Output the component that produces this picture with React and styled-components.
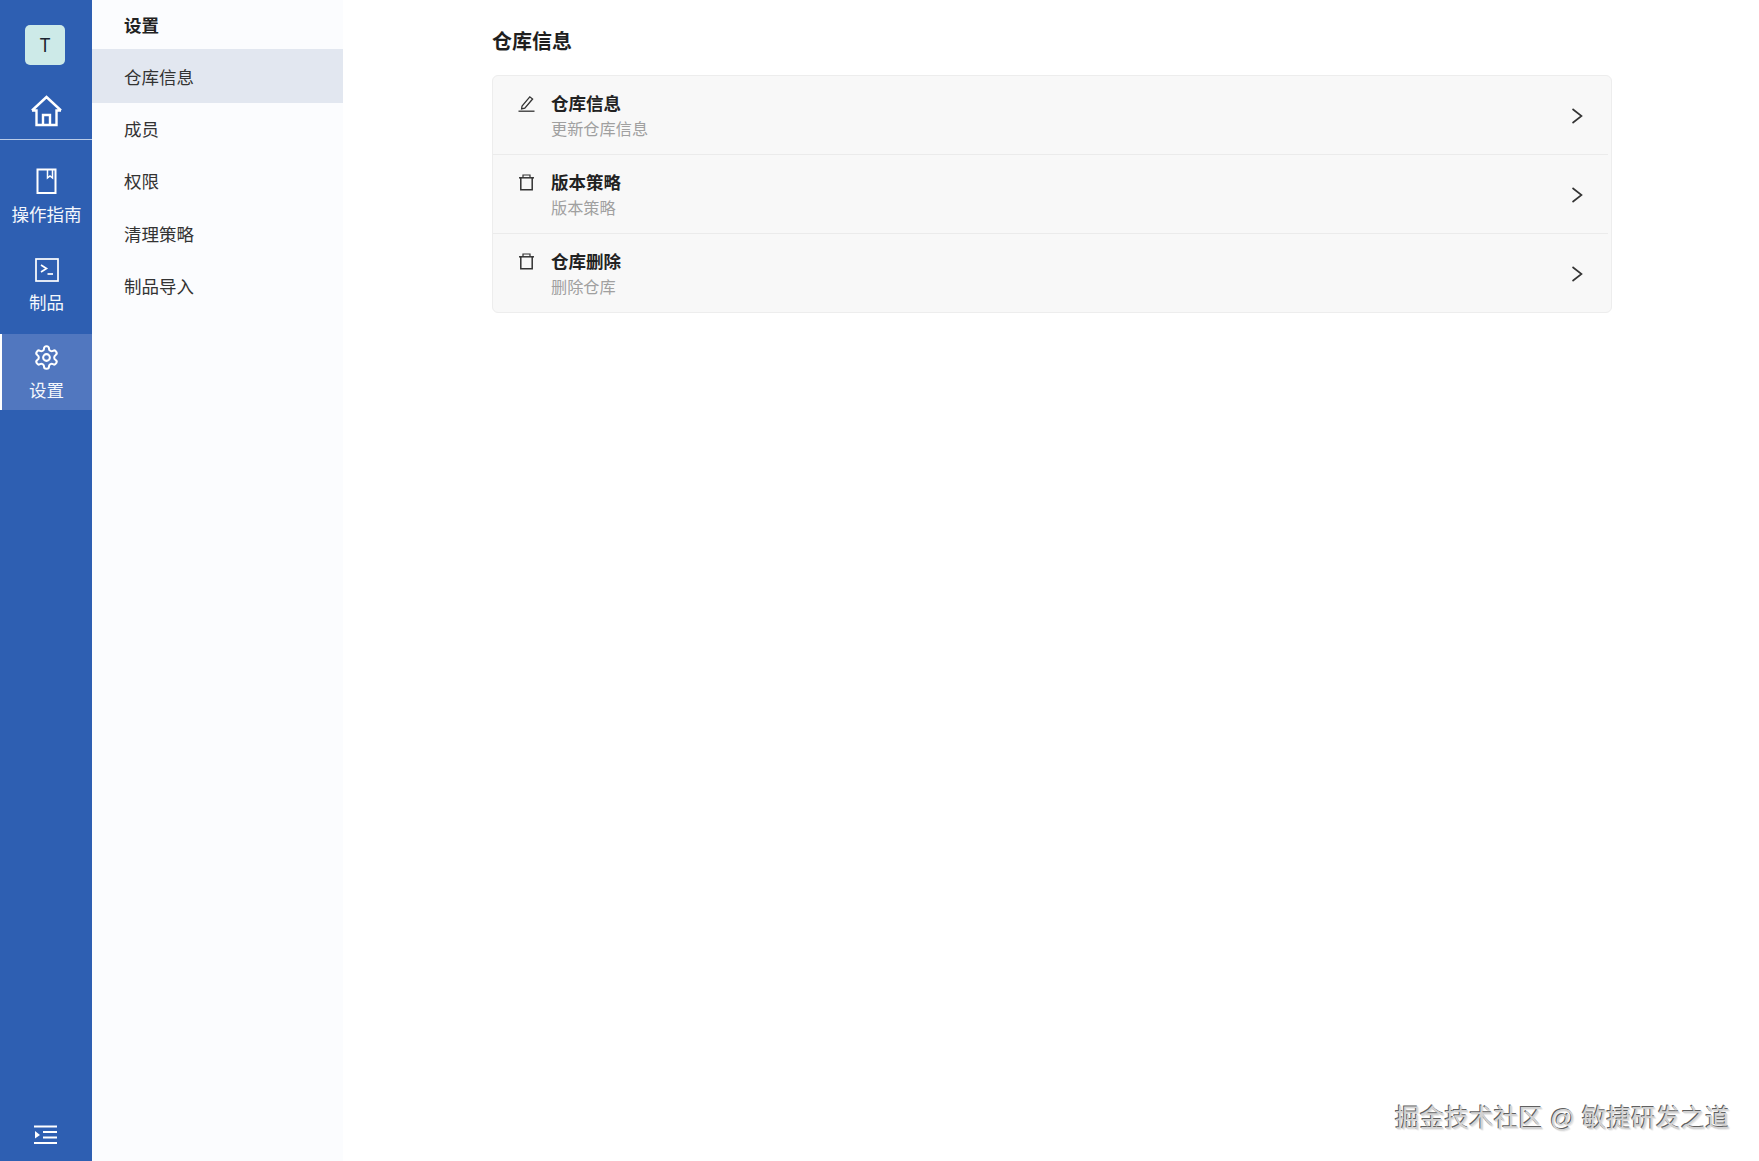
import React from "react";
import styled, { createGlobalStyle } from "styled-components";

const Global = createGlobalStyle`
  html, body { margin: 0; padding: 0; height: 100%; background: #fff; }
  #root { height: 100%; }
  * { box-sizing: border-box; }
  body { font-family: "Inter", "Noto Sans CJK SC", sans-serif; color: #1f1f1f; }
`;

const Page = styled.div`
  display: flex;
  width: 1759px;
  height: 1161px;
  overflow: hidden;
  position: relative;
  background: #fff;
`;
const Rail = styled.aside`
  width: 92px;
  flex: none;
  background: #2e5fb2;
  display: flex;
  flex-direction: column;
  align-items: stretch;
  color: #fff;
`;
const Top = styled.div`
  height: 140px;
  border-bottom: 1px solid #b9cbe8;
  padding-top: 25px;
  display: flex;
  flex-direction: column;
  align-items: center;
`;
const Avatar = styled.div`
  width: 40px;
  height: 40px;
  margin-left: -2px;
  border-radius: 5px;
  background: #cdeae8;
  color: #1c2430;
  font-size: 18px;
  display: flex;
  align-items: center;
  justify-content: center;
`;
const HomeWrap = styled.div`
  margin-top: 30px;
  height: 32px;
  display: flex;
`;
const RailItems = styled.nav`
  flex: 1;
  padding-top: 16px;
  display: flex;
  flex-direction: column;
  gap: 15px;
`;
const RailItem = styled.div`
  height: ${(p) => (p.$active ? 76 : 74)}px;
  padding: ${(p) => p.$pt}px 1px 0 0;
  display: flex;
  flex-direction: column;
  align-items: center;
  gap: 7.5px;
  font-size: 17.5px;
  line-height: 24px;
  color: #f4f7fc;
  background: ${(p) => (p.$active ? "#5177bf" : "transparent")};
  border-left: 2px solid ${(p) => (p.$active ? "#ffffff" : "transparent")};
`;
const IconBox = styled.div`
  height: 27px;
  display: flex;
  align-items: center;
  justify-content: center;
`;
const Collapse = styled.div`
  height: 52px;
  display: flex;
  align-items: center;
  justify-content: center;
`;
const Sub = styled.aside`
  width: 251px;
  flex: none;
  background: #fbfcfe;
`;
const SubTitle = styled.div`
  height: 49px;
  padding: 14px 0 0 32px;
  font-size: 17.5px;
  line-height: 24px;
  font-weight: 600;
  color: #222;
`;
const SubItem = styled.div`
  height: ${(p) => (p.$active ? 54 : 52.3)}px;
  padding: 0 0 ${(p) => (p.$active ? 0 : 1)}px 32px;
  display: flex;
  align-items: center;
  font-size: 17.5px;
  color: #333;
  background: ${(p) => (p.$active ? "#e2e7f0" : "transparent")};
`;
const Main = styled.main`
  flex: 1;
  padding: 28px 147px 0 149px;
`;
const Heading = styled.h1`
  margin: 0 0 19px 0;
  font-size: 20px;
  line-height: 28px;
  font-weight: 600;
  color: #1f1f1f;
`;
const Card = styled.section`
  background: #f8f8f8;
  border: 1px solid #ededed;
  border-radius: 6px;
  padding: 0 3px 0 0;
`;
const Row = styled.div`
  height: ${(p) => (p.$last ? 78 : 79)}px;
  display: flex;
  align-items: flex-start;
  padding: 16px 25px 0 25px;
  border-bottom: ${(p) => (p.$last ? "none" : "1px solid #ebebeb")};
`;
const RowIcon = styled.div`
  width: 33px;
  height: 24px;
  margin-top: -1px;
  display: flex;
  align-items: center;
  flex: none;
`;
const RowText = styled.div`
  flex: 1;
`;
const RowTitle = styled.div`
  font-size: 17.5px;
  line-height: 24px;
  font-weight: 600;
  color: #222;
`;
const RowSub = styled.div`
  margin-top: 1px;
  font-size: 16.2px;
  line-height: 24px;
  color: #a0a0a0;
`;
const Chevron = styled.div`
  align-self: center;
  margin-top: -14px;
  display: flex;
`;
const Watermark = styled.div`
  position: absolute;
  left: 1395px;
  top: 1102px;
  font-size: 24.7px;
  line-height: 34px;
  white-space: nowrap;
  font-family: "Liberation Sans", "Noto Sans CJK SC", sans-serif;
  color: #d2d2d2;
  text-shadow: -1px -1px 0 #606060, 1px 1px 1px #e6e6e6;
`;

const Home = () => (
  <svg width="32" height="32" viewBox="0 0 32 32" fill="none" stroke="#fff" strokeWidth="2.4" strokeLinejoin="miter">
    <path d="M2 15.5 16.5 2 31 15.5 M2 15.5H6.5V30H26.5V15.5H31" />
    <path d="M13 30V20H20V30" />
  </svg>
);
const Book = () => (
  <svg width="22" height="27" viewBox="0 0 22 27" fill="none" stroke="#fff" strokeWidth="2">
    <rect x="1.5" y="1.5" width="18" height="23.5" />
    <path d="M11.5 1.5V10L14 8 16.5 10V1.5" strokeWidth="1.5" />
  </svg>
);
const Terminal = () => (
  <svg width="24" height="24" viewBox="0 0 24 24" fill="none" stroke="#fff" strokeWidth="1.7">
    <rect x="1" y="1" width="22" height="22" />
    <path d="M6 7 11.5 10.5 6 14" />
    <path d="M12.5 16H18" />
  </svg>
);
const Gear = () => (
  <svg width="27" height="27" viewBox="0 0 24 24" fill="none" stroke="#fff" strokeWidth="1.8" strokeLinecap="round" strokeLinejoin="round">
    <path d="M12.22 2h-.44a2 2 0 0 0-2 2v.18a2 2 0 0 1-1 1.73l-.43.25a2 2 0 0 1-2 0l-.15-.08a2 2 0 0 0-2.73.73l-.22.38a2 2 0 0 0 .73 2.73l.15.1a2 2 0 0 1 1 1.72v.51a2 2 0 0 1-1 1.74l-.15.09a2 2 0 0 0-.73 2.73l.22.38a2 2 0 0 0 2.73.73l.15-.08a2 2 0 0 1 2 0l.43.25a2 2 0 0 1 1 1.73V20a2 2 0 0 0 2 2h.44a2 2 0 0 0 2-2v-.18a2 2 0 0 1 1-1.73l.43-.25a2 2 0 0 1 2 0l.15.08a2 2 0 0 0 2.73-.73l.22-.39a2 2 0 0 0-.73-2.73l-.15-.08a2 2 0 0 1-1-1.74v-.5a2 2 0 0 1 1-1.74l.15-.09a2 2 0 0 0 .73-2.73l-.22-.38a2 2 0 0 0-2.73-.73l-.15.08a2 2 0 0 1-2 0l-.43-.25a2 2 0 0 1-1-1.73V4a2 2 0 0 0-2-2z" />
    <circle cx="12" cy="12" r="3" />
  </svg>
);
const Indent = () => (
  <svg width="24" height="20" viewBox="0 0 24 20" fill="#fff">
    <rect x="0" y="0.5" width="23" height="2" />
    <rect x="9" y="6" width="14" height="2" />
    <rect x="9" y="11.5" width="14" height="2" />
    <rect x="0" y="17" width="23" height="2" />
    <path d="M1 6 6 10 1 13.5Z" />
  </svg>
);
const Pen = () => (
  <svg width="17" height="17" viewBox="0 0 17 17" fill="none" stroke="#333" strokeWidth="1.3">
    <path d="M4 11.2 11.8 1.8 14.6 4 6.8 13.2 3.6 14Z" />
    <path d="M0.5 16.2H16.5" />
  </svg>
);
const Trash = () => (
  <svg width="17" height="17" viewBox="0 0 17 17" fill="none" stroke="#333" strokeWidth="1.5">
    <path d="M1 3.8H16" />
    <path d="M5 3.8V1H12V3.8" strokeWidth="1.2" />
    <path d="M2.8 3.8V15.8H14.2V3.8" />
  </svg>
);
const ChevronIcon = () => (
  <svg width="12" height="16" viewBox="0 0 12 16" fill="none" stroke="#333" strokeWidth="1.6">
    <path d="M1.5 1 10.5 8 1.5 15" />
  </svg>
);

const rows = [
  { icon: <Pen />, title: "仓库信息", sub: "更新仓库信息" },
  { icon: <Trash />, title: "版本策略", sub: "版本策略" },
  { icon: <Trash />, title: "仓库删除", sub: "删除仓库" },
];
const subs = ["仓库信息", "成员", "权限", "清理策略", "制品导入"];

export default function App() {
  return (
    <Page>
      <Global />
      <Rail>
        <Top>
          <Avatar>T</Avatar>
          <HomeWrap><Home /></HomeWrap>
        </Top>
        <RailItems>
          <RailItem $pt={12}><IconBox><Book /></IconBox>操作指南</RailItem>
          <RailItem $pt={11}><IconBox><Terminal /></IconBox>制品</RailItem>
          <RailItem $pt={10} $active><IconBox><Gear /></IconBox>设置</RailItem>
        </RailItems>
        <Collapse><Indent /></Collapse>
      </Rail>
      <Sub>
        <SubTitle>设置</SubTitle>
        {subs.map((s, i) => (
          <SubItem key={s} $active={i === 0}>{s}</SubItem>
        ))}
      </Sub>
      <Main>
        <Heading>仓库信息</Heading>
        <Card>
          {rows.map((r, i) => (
            <Row key={r.title} $last={i === rows.length - 1}>
              <RowIcon>{r.icon}</RowIcon>
              <RowText>
                <RowTitle>{r.title}</RowTitle>
                <RowSub>{r.sub}</RowSub>
              </RowText>
              <Chevron><ChevronIcon /></Chevron>
            </Row>
          ))}
        </Card>
      </Main>
      <Watermark>掘金技术社区 @ 敏捷研发之道</Watermark>
    </Page>
  );
}
